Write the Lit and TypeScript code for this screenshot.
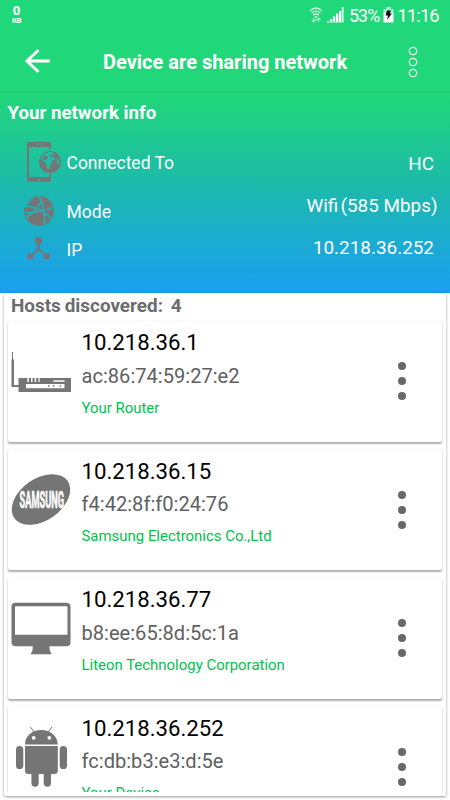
import { LitElement, html, css, svg } from "lit";
import { customElement, property } from "lit/decorators.js";

interface Host {
  ip: string;
  mac: string;
  vendor: string;
  icon: string;
}

const hosts: Host[] = [
  { ip: "10.218.36.1", mac: "ac:86:74:59:27:e2", vendor: "Your Router", icon: "router" },
  { ip: "10.218.36.15", mac: "f4:42:8f:f0:24:76", vendor: "Samsung Electronics Co.,Ltd", icon: "samsung" },
  { ip: "10.218.36.77", mac: "b8:ee:65:8d:5c:1a", vendor: "Liteon Technology Corporation", icon: "monitor" },
  { ip: "10.218.36.252", mac: "fc:db:b3:e3:d:5e", vendor: "Your Device", icon: "android" },
];

// Every host icon is drawn on a 62x62 canvas.
const hostIcons: Record<string, unknown> = {
  router: svg`<g transform="translate(0 11)">
    <path d="M1 0h1v7.500h1V33h4.500v-7H60v14H7.500v-5H.5V7.500H1z"/>
    <path fill="#fff" d="M15 32h38.500v4.300H15zM42.500 28.200h11v1.500h-11zM16.300 26h1.500v4h-1.500zM20 26h1.500v4H20zM23.700 26h1.500v4h-1.500zM27.400 26h1.200v4h-1.200z"/>
    <path d="M37 33.200h1.500v1.600H37zM42 33.200h1.500v1.600H42zM48.500 33.200H50v1.600h-1.500z"/></g>`,
  samsung: svg`
    <ellipse cx="30" cy="30.500" rx="32.500" ry="21" transform="rotate(-35 30 30.500)"/>
    <text transform="translate(8.500 38.800) scale(.385 1)" font-size="24" font-weight="700" font-family="Roboto, sans-serif" fill="#fff" stroke="#fff" stroke-width=".7">SAMSUNG</text>`,
  monitor: svg`
    <path fill-rule="evenodd" d="M4.500 4.700H55.500a4 4 0 0 1 4 4v35.500a4 4 0 0 1-4 4H38.500c0 4 .5 5.500 1.800 6.700V56.200H20v-1.300C21.300 53.700 21.800 52.200 21.800 48.200H4.500a4 4 0 0 1-4-4V8.700a4 4 0 0 1 4-4zM5 8.200q-1 0-1 1V36.700H56.500V9.200q0-1-1-1z"/>`,
  android: svg`
    <path d="M14 18.500C14.300 9.500 21 4 30.200 4S46.300 9.500 46.800 18.500zM14 20h32.800v24.500a3.500 3.500 0 0 1-3.500 3.500H40v9a3.500 3.500 0 0 1-7.300 0v-9h-5v9a3.500 3.500 0 0 1-7.300 0v-9H17.500a3.500 3.500 0 0 1-3.500-3.500z"/>
    <rect x="5" y="20" width="7.300" height="23" rx="3.600"/>
    <rect x="48.700" y="20" width="7.300" height="23" rx="3.600"/>
    <path fill="none" stroke="#757575" stroke-width="1" d="M19.300.8l4.200 5.700M41 .8l-4.200 5.700"/>
    <circle cx="22.700" cy="11.800" r="1.900" fill="#fff"/><circle cx="38.300" cy="11.800" r="1.900" fill="#fff"/>`,
};

@customElement("host-card")
export class HostCard extends LitElement {
  @property({ attribute: false }) host!: Host;

  static styles = css`
    :host { display: block; height: 128.500px; flex: none; }
    .card {
      box-sizing: border-box; height: 121px; margin: 0 4px 0 3.500px; padding-left: 3.500px;
      display: flex; border-radius: 2px; background: #fff;
      box-shadow: 0 1.500px 2px rgba(0, 0, 0, .32), 0 0 1px rgba(0, 0, 0, .12);
    }
    .icon { width: 62px; height: 62px; margin-top: 20px; fill: #757575; flex: none; overflow: visible; }
    .text { margin-left: 8.500px; width: 301.500px; flex: none; white-space: nowrap; }
    .ip { font-size: 22.200px; line-height: 26px; margin-top: 8.700px; color: #000; }
    .mac { font-size: 20.100px; line-height: 24px; margin-top: 8.300px; color: #606060; }
    .vendor { font-size: 14.950px; line-height: 18px; margin-top: 11px; color: #00c24f; }
    .dots { width: 10px; height: 42px; margin: 39.700px 0 0 14px; fill: #686868; }
  `;

  render() {
    return html`<div class="card">
      <svg class="icon" viewBox="0 0 62 62">${hostIcons[this.host.icon]}</svg>
      <div class="text">
        <div class="ip">${this.host.ip}</div>
        <div class="mac">${this.host.mac}</div>
        <div class="vendor">${this.host.vendor}</div>
      </div>
      <svg class="dots" viewBox="0 0 10 42">
        <circle cx="5" cy="6" r="4"/><circle cx="5" cy="21" r="4"/><circle cx="5" cy="36" r="4"/>
      </svg>
    </div>`;
  }
}

@customElement("app-root")
export class AppRoot extends LitElement {
  static styles = css`
    :host {
      display: flex; flex-direction: column; width: 450px; height: 800px; overflow: hidden;
      background: #fff; color: #fff; font-family: Roboto, "Liberation Sans", sans-serif;
    }
    .top { height: 91px; background: #20d87a; flex: none; }
    .status { height: 31px; display: flex; padding: 0 9.500px 0 11px; }
    .rate { text-align: center; width: 11px; padding-top: 5px; }
    .rate b { display: block; font-size: 13px; line-height: 12px; }
    .rate .unit { font-size: 8px; line-height: 7px; margin-top: -.5px; letter-spacing: -.5px; }
    .wifi { width: 14px; height: 18px; margin: 6px 0 0 auto; }
    .signal { width: 17px; height: 16px; margin: 7px 0 0 4px; }
    .pct { font-size: 17.800px; line-height: 31px; margin-left: 5px; width: 31px; letter-spacing: -.9px; }
    .battery { width: 11px; height: 16px; margin: 7px 0 0 2.500px; }
    .clock { font-size: 18.200px; line-height: 31px; margin-left: 4px; width: 43px; letter-spacing: -.8px; }
    .bar { height: 60px; display: flex; align-items: center; }
    .back { width: 26px; height: 26px; margin-left: 24px; }
    .title { margin: 2px 0 0 53px; width: 304.500px; font-size: 20px; font-weight: 700; white-space: nowrap; }
    .more { width: 10px; height: 32px; margin-top: 1px; }
    .info {
      box-sizing: border-box; height: 201.500px; flex: none; border-top: 2px solid #20cc74;
      background: linear-gradient(#21d877, #1dbba9 45%, #1a9ff2); background-origin: border-box;
    }
    .heading { padding: 8px 0 0 7.500px; font-size: 18.700px; line-height: 24px; font-weight: 700; }
    .row { display: flex; font-size: 17.500px; line-height: 24px; white-space: nowrap; }
    .row svg { fill: #757575; flex: none; }
    .value { font-size: 18.900px; }
    .connected { height: 46px; padding: 16px 16px 0 26px; }
    .connected svg { width: 36px; height: 41px; margin-left: -.3px; }
    .connected .label { margin: 10px auto 0 4.800px; }
    .connected .value { margin-top: 10.500px; }
    .mode { height: 34px; padding: 8px 12.500px 0 24px; }
    .mode svg { width: 30px; height: 30px; margin-top: .7px; }
    .mode .label { margin: 5px auto 0 12.500px; }
    .mode .value { margin-top: -1px; }
    .gap { margin-left: -2.500px; }
    .ipaddr { padding: 7px 16px 0 27px; }
    .ipaddr svg { width: 23px; height: 24px; }
    .ipaddr .label { margin: 1.500px auto 0 16.500px; }
    .ipaddr .value { margin-top: -.5px; }
    .list {
      box-sizing: border-box; height: 503px; margin: .5px 4px 0; overflow: hidden;
      display: flex; flex-direction: column; border-radius: 2px; background: #fff;
      box-shadow: 0 1px 3px rgba(0, 0, 0, .4); flex: none;
    }
    .viewport { height: 499px; overflow: hidden; display: flex; flex-direction: column; }
    .count { height: 27.800px; flex: none; box-sizing: border-box; padding: 2px 0 0 7px; font-size: 18.900px; line-height: 22px; font-weight: 700; color: #6c6c6c; white-space: pre; word-spacing: -.8px; }
  `;

  render() {
    return html`
      <header class="top">
        <div class="status">
          <div class="rate"><b>0</b><b class="unit">KB</b></div>
          <svg class="wifi" viewBox="0 0 14 18" fill="none" stroke="#fff" stroke-width="1.200">
            <path opacity=".75" d="M1 5Q7-1 13 5M2.600 7.300Q7 3 11.400 7.300"/><path d="M4.300 9.200Q7 6.600 9.700 9.200"/>
            <path fill="#fff" stroke="none" d="M5.500 10.200h3L7 12z"/>
            <path opacity=".6" d="M5 12v4M3 14l2 2 2-2M9.500 16v-4M7.500 14l2-2 2 2"/>
          </svg>
          <svg class="signal" viewBox="0 0 17 16" fill="#fff">
            <path d="M0 14h2.300v1.500H0zM3 12h2.300v3.500H3zM6 9.500h2.300v6H6zM9 6.500h2.300v9H9zM12 4h2.300v11.500H12z"/><path opacity=".75" d="M14.700 0h2v15.500h-2z"/>
          </svg>
          <span class="pct">53%</span>
          <svg class="battery" viewBox="0 0 11 16">
            <path fill="#a6efca" d="M3 0h5v2h2.500v5H.5V2H3z"/><path fill="#fff" d="M.5 6h10v9.500H.5z"/>
            <path fill="#111" d="M4 3.500h4L6.800 6.500H9L4 13l1-4.500H2.500z"/>
          </svg>
          <span class="clock">11:16</span>
        </div>
        <div class="bar">
          <svg class="back" viewBox="0 0 26 26" fill="none" stroke="#fff" stroke-width="3">
            <path d="M26 13H3M14.500 2L3 13l11.500 11"/>
          </svg>
          <div class="title">Device are sharing network</div>
          <svg class="more" viewBox="0 0 10 32" fill="none" stroke="#fff" stroke-width="1.200">
            <circle cx="5" cy="5" r="3.700"/><circle cx="5" cy="16" r="3.700"/><circle cx="5" cy="27" r="3.700"/>
          </svg>
        </div>
      </header>
      <section class="info">
        <div class="heading">Your network info</div>
        <div class="row connected">
          <svg viewBox="0 0 36 41">
            <path fill-rule="evenodd" d="M3.500.7h19q2.500 0 2.500 2.500V8l-2 .7V6H3v30h20v-2.500l2-1V38.200q0 2.500-2.500 2.500h-19Q1 40.700 1 38.200v-35Q1 .7 3.500.7z"/>
            <path fill="#28bfa2" d="M10 2.700h6.500v.8H10zM12.300 38h2v1.200h-2z"/>
            <circle cx="24" cy="21" r="11"/>
            <path fill="#20bda5" d="M14.500 17.500l3-4.500 5-2.200 4 .4 2.500 1.300-2.500 1.500-2-.7-1 1.500 2.500.5 2.500 1 .3 2.500-2.500 1-.3 2-2 3-1 4-2-1-.3-4-2.500-3.500-1.500.3z"/>
            <path d="M16.500 17l2-2.500 2.500.5 1 2-2 1.500-3 .5z"/>
            <path fill="#20bda5" d="M31 17.500l2.300-.5.3 3.500-1.300 3.500-1.500-2.500z"/>
          </svg>
          <span class="label">Connected To</span><span class="value">HC</span>
        </div>
        <div class="row mode">
          <svg viewBox="0 0 30 30">
            <circle cx="15" cy="15" r="15"/>
            <g fill="none" stroke="#1db4bd" stroke-width="1.500">
              <path d="M0 10.500Q14 8 30 25M0 16.500Q14 17 30 11.500M15 0Q21 10 20.500 30M18 5Q12 15 2 22"/>
              <path d="M0 11L9 1"/>
            </g>
          </svg>
          <span class="label">Mode</span><span class="value">Wifi <span class="gap">(585 Mbps)</span></span>
        </div>
        <div class="row ipaddr">
          <svg viewBox="0 0 23 24">
            <circle cx="11.500" cy="4.500" r="3.600"/>
            <path d="M10.200 7h2.600v6l5.400 4.500H23V23h-6v-4l-5.500-4.300L6.300 19v4H.5v-5.500h4.800l4.900-4.500z"/>
          </svg>
          <span class="label">IP</span><span class="value">10.218.36.252</span>
        </div>
      </section>
      <main class="list">
        <div class="viewport">
          <div class="count">Hosts discovered:  4</div>
          ${hosts.map((h) => html`<host-card .host=${h}></host-card>`)}
        </div>
      </main>`;
  }
}
